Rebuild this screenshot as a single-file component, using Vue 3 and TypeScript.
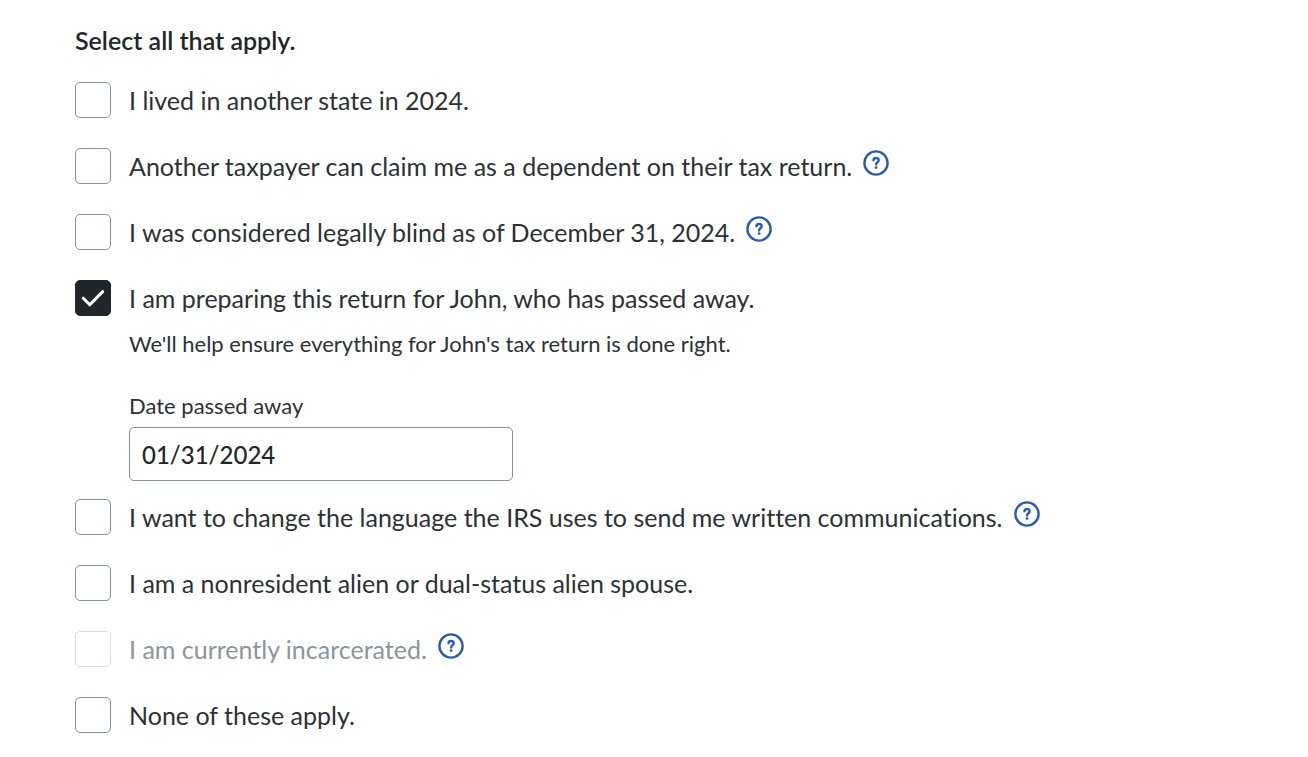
<script setup lang="ts">
import { ref } from 'vue'

interface Choice {
  id: string
  text: string
  checked: boolean
  help?: boolean
  disabled?: boolean
  details?: boolean
}

const choices = ref<Choice[]>([
  { id: 'other-state', text: 'I lived in another state in 2024.', checked: false },
  { id: 'dependent', text: 'Another taxpayer can claim me as a dependent on their tax return.', checked: false, help: true },
  { id: 'blind', text: 'I was considered legally blind as of December 31, 2024.', checked: false, help: true },
  { id: 'deceased', text: 'I am preparing this return for John, who has passed away.', checked: true, details: true },
  { id: 'language', text: 'I want to change the language the IRS uses to send me written communications.', checked: false, help: true },
  { id: 'nonresident', text: 'I am a nonresident alien or dual-status alien spouse.', checked: false },
  { id: 'incarcerated', text: 'I am currently incarcerated.', checked: false, help: true, disabled: true },
  { id: 'none', text: 'None of these apply.', checked: false },
])
const datePassed = ref('01/31/2024')
</script>

<template>
  <form class="page" @submit.prevent>
    <fieldset class="group">
      <legend class="heading">Select all that apply.</legend>
      <div v-for="c in choices" :key="c.id" class="choice" :class="{ open: c.details && c.checked }">
        <div class="row">
          <span class="box">
            <input :id="c.id" v-model="c.checked" class="check" type="checkbox" :disabled="c.disabled" />
            <svg v-if="c.checked" class="tick" viewBox="0 0 36 36" aria-hidden="true">
              <path d="M8.3 18.2 L14.8 24.8 L27.7 11.6" />
            </svg>
          </span>
          <label class="text" :class="{ muted: c.disabled }" :for="c.id">{{ c.text }}</label>
          <button v-if="c.help" class="help" type="button" aria-label="Help">
            <svg viewBox="0 0 26 26" aria-hidden="true">
              <circle cx="13" cy="13" r="11.6" />
              <path d="M10.5 10.2 C10.6 8.7 11.7 8 13.1 8 C14.6 8 15.7 8.9 15.7 10.3 C15.7 12.4 13.1 12.2 13.1 14.4" />
              <circle class="dot" cx="13.1" cy="17.6" r="1.4" />
            </svg>
          </button>
        </div>
        <div v-if="c.details && c.checked" class="details">
          <p class="note">We'll help ensure everything for John's tax return is done right.</p>
          <label class="field-label" for="date-passed">Date passed away</label>
          <input id="date-passed" v-model="datePassed" class="field" type="text" />
        </div>
      </div>
    </fieldset>
  </form>
</template>

<style>
body {
  background: #fff;
}
</style>

<style scoped>
.page {
  padding: 22px 75px;
  color: #2c3136;
  font-family: Lato, "Open Sans", sans-serif;
  font-variant-ligatures: none;
}
.group {
  margin: 0;
  padding: 0;
  border: 0;
  min-width: 0;
}
.heading {
  padding: 0 0 24px;
  color: #21262a;
  font-size: 25px;
  line-height: 36px;
  font-weight: 600;
}
.choice {
  margin-bottom: 30px;
}
.choice.open {
  margin-bottom: 18px;
}
.choice:last-child {
  margin-bottom: 0;
}
.row {
  display: flex;
  align-items: center;
}
.box {
  display: grid;
  flex: none;
  width: 36px;
  height: 36px;
  margin-right: 18px;
}
.check,
.tick {
  grid-area: 1 / 1;
  width: 36px;
  height: 36px;
}
.check {
  appearance: none;
  box-sizing: border-box;
  margin: 0;
  border: 1px solid #84929b;
  border-radius: 5px;
  background: #fff;
}
.check:checked {
  border-color: #21262a;
  background: #21262a;
}
.check:disabled {
  border-color: #d8dfe3;
}
.tick {
  pointer-events: none;
  fill: none;
  stroke: #fff;
  stroke-width: 3;
  stroke-linecap: round;
  stroke-linejoin: round;
}
.text {
  font-size: 25px;
  line-height: 36px;
  font-weight: 400;
}
.muted {
  color: #8a959c;
}
.help {
  flex: none;
  align-self: flex-start;
  width: 26px;
  height: 26px;
  margin: 2px 0 0 11px;
  padding: 0;
  border: 0;
  background: none;
}
.help svg {
  display: block;
  width: 26px;
  height: 26px;
  fill: none;
  stroke: #2b5ca8;
  stroke-width: 2.4;
  stroke-linecap: round;
}
.help .dot {
  fill: #2b5ca8;
  stroke: none;
}
.details {
  margin-left: 54px;
}
.note {
  margin: 12px 0 30px;
  font-size: 22px;
  line-height: 32px;
  font-weight: 400;
}
.field-label {
  display: block;
  margin-bottom: 5px;
  font-size: 22px;
  line-height: 32px;
  font-weight: 400;
}
.field {
  display: block;
  box-sizing: border-box;
  width: 100%;
  max-width: 384px;
  height: 54px;
  padding: 0 12px;
  border: 1px solid #84929b;
  border-radius: 5px;
  background: #fff;
  color: #21262a;
  font-family: inherit;
  font-size: 24px;
  font-weight: 500;
}
</style>
